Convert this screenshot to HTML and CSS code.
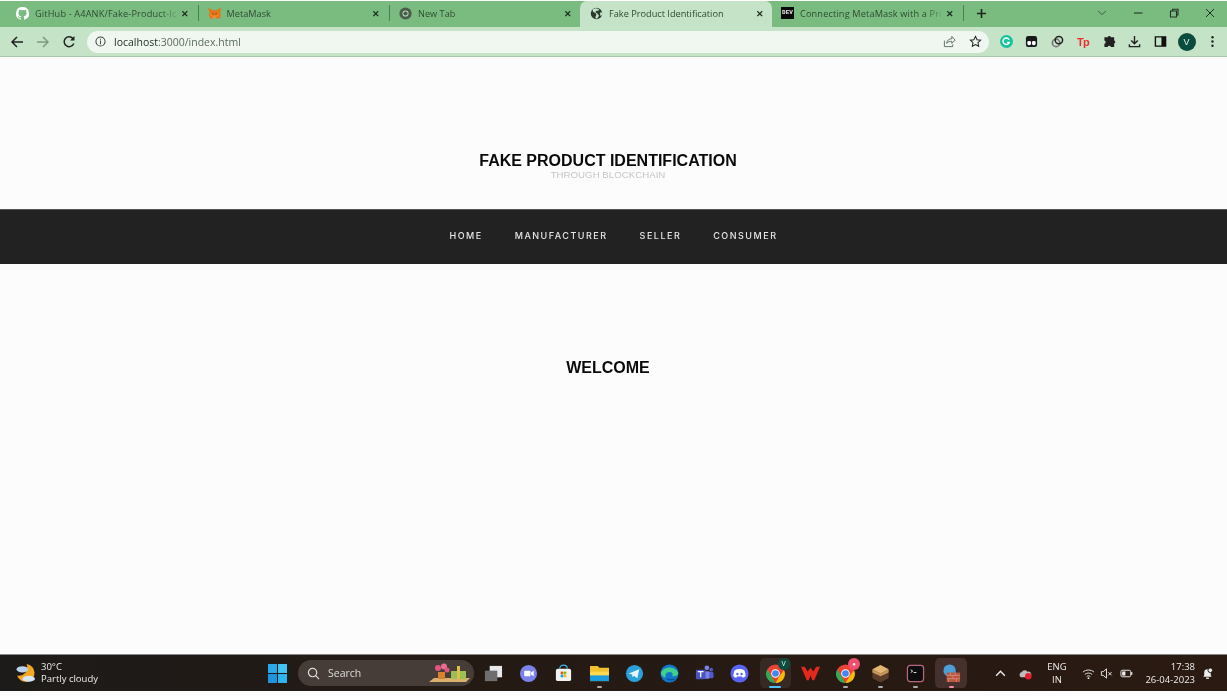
FILE: index.html
```html
<!DOCTYPE html>
<html lang="en">
<head>
<meta charset="utf-8">
<title>Fake Product Identification</title>
<link rel="stylesheet" href="styles.css">
</head>
<body>
<div class="browser">
  <div class="tabstrip">
    <div class="tab">
      <svg class="fav" viewBox="0 0 16 16"><path fill="#fff" d="M8 0a8 8 0 0 0-2.500 15.600c.4.100.5-.2.5-.4v-1.400c-2.200.5-2.700-1-2.700-1-.4-.9-.9-1.200-.9-1.200-.7-.5.100-.5.100-.5.800.100 1.200.8 1.200.8.700 1.200 1.900.9 2.300.7.100-.5.300-.9.500-1.100-1.800-.2-3.600-.9-3.600-4 0-.9.300-1.600.8-2.100-.1-.2-.4-1 .1-2.100 0 0 .7-.2 2.200.8a7.600 7.600 0 0 1 4 0c1.500-1 2.200-.8 2.200-.8.500 1.100.2 1.900.1 2.100.5.500.8 1.200.8 2.100 0 3.100-1.900 3.800-3.700 4 .3.300.6.800.6 1.500v2.200c0 .2.100.5.600.4A8 8 0 0 0 8 0z"/></svg>
      <span class="tab-title fade">GitHub - A4ANK/Fake-Product-Ic</span>
      <span class="tab-x">✕</span>
    </div>
    <i class="tab-sep"></i>
    <div class="tab">
      <svg class="fav" viewBox="0 0 16 16"><path fill="#e2761b" d="M0 1l6 3h4l6-3-1 6 1 3-2 4.500-3-1-1 1H7l-1-1-3 1L1 10l1-3z"/><path fill="#f6851b" d="M5 8l1.500 2H9.500L11 8l2.500 1-2.500 3.500H5L2.500 9z"/><path fill="#763d16" d="M5 8h2v1.200H5zM9 8h2v1.200H9z"/><path fill="#c0ad9e" d="M6.500 12.500h3v1.500h-3z"/></svg>
      <span class="tab-title">MetaMask</span>
      <span class="tab-x">✕</span>
    </div>
    <i class="tab-sep"></i>
    <div class="tab">
      <svg class="fav" viewBox="0 0 16 16"><circle cx="8" cy="8" r="7.500" fill="#4a5c4c"/><circle cx="8" cy="8" r="3.800" fill="#b5d8b8"/><circle cx="8" cy="8" r="2.600" fill="#4a5c4c"/></svg>
      <span class="tab-title">New Tab</span>
      <span class="tab-x">✕</span>
    </div>
    <div class="tab tab-active">
      <svg class="fav" viewBox="0 0 16 16"><circle cx="8" cy="8" r="7" fill="#2b3a2d"/><path fill="#c5e3c7" d="M7 1.500L3 3l1 3 2.500 1L8 9.500l-1.500 3 1 2 2-1 1.500-3L9 8 6.500 6 8 4.500h2.500L11 2.500zM12 7l2.500-.5.500 3-2 2-.5-2.500z"/></svg>
      <span class="tab-title">Fake Product Identification</span>
      <span class="tab-x">✕</span>
    </div>
    <div class="tab tab-dev">
      <span class="dev">DEV</span>
      <span class="tab-title fade">Connecting MetaMask with a Pri</span>
      <span class="tab-x">✕</span>
    </div>
    <i class="tab-sep"></i>
    <svg class="newtab" viewBox="0 0 12 12"><path d="M6 1v10M1 6h10" stroke="#1c2b1e" stroke-width="1.800"/></svg>
    <div class="winctl">
      <svg class="ctl" viewBox="0 0 12 12"><path d="M2 4l4 3.500L10 4" fill="none" stroke="#42604a" stroke-width="1"/></svg>
      <svg class="ctl" viewBox="0 0 12 12"><path d="M2 6h8.500" stroke="#223026" stroke-width="1.100"/></svg>
      <svg class="ctl" viewBox="0 0 12 12"><path d="M2.500 4h6v6h-6zM4.500 4V2.200h5.500v5.800H8.500" fill="none" stroke="#223026" stroke-width="1.100"/></svg>
      <svg class="ctl" viewBox="0 0 12 12"><path d="M2 2l8 8M10 2l-8 8" stroke="#223026" stroke-width="1"/></svg>
    </div>
  </div>
  <div class="toolbar">
    <svg class="nav-ic" viewBox="0 0 14 14"><path d="M13 7H2M7 2L2 7l5 5" fill="none" stroke="#222" stroke-width="1.500"/></svg>
    <svg class="nav-ic" viewBox="0 0 14 14"><path d="M1 7h11M7 2l5 5-5 5" fill="none" stroke="#7f9a82" stroke-width="1.500"/></svg>
    <svg class="nav-ic" viewBox="0 0 14 14"><path d="M11.800 8.500A5 5 0 1 1 11 3.500" fill="none" stroke="#222" stroke-width="1.500"/><path d="M12.500 1v4.500H8z" fill="#222"/></svg>
    <div class="omnibox">
      <svg class="info" viewBox="0 0 12 12"><circle cx="6" cy="6" r="5" fill="none" stroke="#3b4a3d" stroke-width="1.100"/><path d="M6 5v4M6 3v1.200" stroke="#3b4a3d" stroke-width="1.100"/></svg>
      <span class="url"><b>localhost</b>:3000/index.html</span>
      <svg class="omni-ic" viewBox="0 0 14 14"><path d="M1.500 6v6.500h9V10M4 9c0-3.500 3-5 5.500-5V1.500L13 5.500 9.500 9V6.800C7 6.800 5.200 7.300 4 9z" fill="none" stroke="#5d6b5f" stroke-width="1"/></svg>
      <svg class="omni-ic" viewBox="0 0 14 14"><path d="M7 1.500l1.700 3.600 3.800.5-2.800 2.600.7 3.900L7 10.200l-3.400 1.900.7-3.900L1.500 5.600l3.800-.5z" fill="none" stroke="#222" stroke-width="1.100"/></svg>
    </div>
    <div class="exts">
      <svg class="ext" viewBox="0 0 14 14"><circle cx="7" cy="7" r="7" fill="#15c39a"/><path d="M9.800 5A3.500 3.500 0 1 0 10 8H7.500" fill="none" stroke="#fff" stroke-width="1.500"/></svg>
      <svg class="ext" viewBox="0 0 14 14"><rect x="1" y="1" width="12" height="12" rx="2.500" fill="#16181a"/><rect x="2.500" y="6.500" width="4" height="4.500" rx="1.500" fill="#fff"/><rect x="7.500" y="6.500" width="4" height="4.500" rx="1.500" fill="#fff"/></svg>
      <svg class="ext" viewBox="0 0 14 14"><circle cx="5.500" cy="8.500" r="4" fill="none" stroke="#777" stroke-width="1.800"/><circle cx="8.500" cy="5.500" r="4" fill="none" stroke="#222" stroke-width="1.600"/></svg>
      <span class="tp">Tp</span>
      <svg class="ext" viewBox="0 0 14 14"><path fill="#222" d="M5 2.500a1.800 1.800 0 0 1 3.500 0H12v3.300a1.800 1.800 0 0 1 0 3.400V13H8.500a1.800 1.800 0 0 0-3.500 0H1.500V9.500a1.800 1.800 0 0 0 0-3.500V2.500z"/></svg>
      <svg class="ext" viewBox="0 0 14 14"><path d="M7 1v8M3.500 6L7 9.500 10.500 6M1.500 10v2.500h11V10" fill="none" stroke="#222" stroke-width="1.500"/></svg>
      <svg class="ext" viewBox="0 0 14 14"><path d="M1.500 2h11v10h-11z" fill="none" stroke="#111" stroke-width="1.500"/><path d="M8 2h4.500v10H8z" fill="#111"/></svg>
      <span class="avatar">V</span>
      <svg class="ext" viewBox="0 0 14 14"><circle cx="7" cy="2.500" r="1.300" fill="#222"/><circle cx="7" cy="7" r="1.300" fill="#222"/><circle cx="7" cy="11.500" r="1.300" fill="#222"/></svg>
    </div>
  </div>
</div>

<main class="page">
  <header class="hero">
    <h1 class="hero-title">FAKE PRODUCT IDENTIFICATION</h1>
    <p class="hero-sub">THROUGH BLOCKCHAIN</p>
  </header>
  <nav class="mainnav">
    <a>HOME</a><a>MANUFACTURER</a><a>SELLER</a><a>CONSUMER</a>
  </nav>
  <h2 class="welcome">WELCOME</h2>
</main>

<footer class="taskbar">
  <div class="weather">
    <svg class="wx" viewBox="0 0 20 20"><path d="M11 1a8.500 8.500 0 1 1-9 11 8 8 0 0 0 9-11z" fill="#f5a623"/><ellipse cx="7" cy="6" rx="5.500" ry="3" fill="#b9d4ee"/><ellipse cx="13" cy="15" rx="6" ry="2.800" fill="#d5e6f7"/></svg>
    <div class="wx-text"><span>30°C</span><span>Partly cloudy</span></div>
  </div>
  <div class="apps">
    <svg class="win" viewBox="0 0 18 18"><rect width="8.500" height="8.500" fill="#2aa8ea"/><rect x="9.500" width="8.500" height="8.500" fill="#40c4f4"/><rect y="9.500" width="8.500" height="8.500" fill="#1f93dd"/><rect x="9.500" y="9.500" width="8.500" height="8.500" fill="#2fb5ee"/></svg>
    <div class="search">
      <svg class="search-ic" viewBox="0 0 14 14"><circle cx="6" cy="6" r="4.500" fill="none" stroke="#ddd" stroke-width="1.300"/><path d="M9.300 9.300L13 13" stroke="#ddd" stroke-width="1.300"/></svg>
      <span class="search-text">Search</span>
      <svg class="search-art" viewBox="0 0 42 20"><path d="M0 19l5-4h36l-4 4z" fill="#d9b06c"/><rect x="9" y="9" width="7" height="7" fill="#d9822b"/><circle cx="9" cy="5" r="3" fill="#e0567f"/><circle cx="15" cy="3.500" r="3" fill="#ec6c94"/><circle cx="18" cy="7" r="2.500" fill="#e0567f"/><rect x="22" y="8" width="15" height="8" fill="#9cbf54"/><rect x="28" y="3" width="3" height="13" fill="#d8c24a"/></svg>
    </div>
    <div class="dock">
      <span class="app"><svg viewBox="0 0 20 20"><rect x="6" y="2" width="13" height="12" fill="#e8e8e8"/><rect x="1" y="7" width="13" height="11" fill="#6e6e6e"/></svg></span>
      <span class="app"><svg viewBox="0 0 20 20"><circle cx="10" cy="10" r="9" fill="#7b83eb"/><rect x="5.500" y="7" width="6.500" height="6" rx="1" fill="#fff"/><path d="M12.500 9l3-2v6l-3-2z" fill="#fff"/></svg></span>
      <span class="app"><svg viewBox="0 0 20 20"><rect x="2" y="5" width="16" height="13" rx="2" fill="#f2f2f2"/><path d="M6 5c0-5 8-5 8 0" fill="none" stroke="#3ab4e8" stroke-width="1.300"/><rect x="7" y="8" width="2.800" height="2.800" fill="#f25022"/><rect x="10.200" y="8" width="2.800" height="2.800" fill="#7fba00"/><rect x="7" y="11.200" width="2.800" height="2.800" fill="#00a4ef"/><rect x="10.200" y="11.200" width="2.800" height="2.800" fill="#ffb900"/></svg></span>
      <span class="app on"><svg viewBox="0 0 20 20"><path d="M0 2h8l2 2h10v14H0z" fill="#f2c12e"/><path d="M0 8h20v10H0z" fill="#ffd84d"/><rect y="12" width="20" height="6" fill="#1b9be0"/></svg></span>
      <span class="app"><svg viewBox="0 0 20 20"><circle cx="10" cy="10" r="9" fill="#2aa1da"/><path d="M4 10l11-4.500-2 9.500-3.500-2.500-1.500 1.500-.5-3z" fill="#e8f5fb"/></svg></span>
      <span class="app"><svg viewBox="0 0 20 20"><circle cx="10" cy="10" r="9.500" fill="#1277c9"/><path d="M1 9.500C3 3 15 1 19 9c.5 3-3 4.500-6 3.500 1-2-.5-4-3-4-3.500 0-5 3-4 6C3 13.500 1.500 12 1 9.500z" fill="#3fd08e"/><path d="M6 15c3 3.500 8 3 11 0-4 1.500-8 .5-11 0z" fill="#0a4f99"/></svg></span>
      <span class="app"><svg viewBox="0 0 20 20"><circle cx="12.500" cy="4" r="2.500" fill="#7b83eb"/><circle cx="17" cy="6" r="2" fill="#5059c9"/><rect x="9" y="7.500" width="7" height="8" rx="2" fill="#7b83eb"/><rect x="15" y="8.500" width="4.500" height="6.500" rx="1.500" fill="#5059c9"/><rect x="1" y="6" width="10" height="10" rx="1" fill="#4b53bc"/><path d="M3 8h6M6 8v6" stroke="#fff" stroke-width="1.300"/></svg></span>
      <span class="app"><svg viewBox="0 0 20 20"><circle cx="10" cy="10" r="9.500" fill="#5865f2"/><path d="M5 6.500c3-1.500 7-1.500 10 0 1 2 1.500 4.500 1.500 6.500-1 1-2 1.200-3 1.500l-.8-1.300H7.300l-.8 1.300c-1-.3-2-.5-3-1.500 0-2 .5-4.500 1.500-6.500z" fill="#fff"/><circle cx="7.800" cy="10.500" r="1.300" fill="#5865f2"/><circle cx="12.200" cy="10.500" r="1.300" fill="#5865f2"/></svg></span>
      <span class="app active"><svg viewBox="0 0 20 20"><circle cx="10" cy="10" r="9.500" fill="#ea4335"/><path d="M1.500 5.500L6 13.500l4 6.500A9.500 9.500 0 0 1 1.500 5.500z" fill="#34a853"/><path d="M10 20l4.200-7L19 6.500A9.500 9.500 0 0 1 10 20z" fill="#fbbc05"/><circle cx="10" cy="10" r="4.500" fill="#fff"/><circle cx="10" cy="10" r="3.500" fill="#4285f4"/></svg><b class="badge green">V</b></span>
      <span class="app"><svg viewBox="0 0 20 20"><path d="M0 3h4l3 5 3-4 3 4 3-5h4l-6 14h-2l-2-5-2 5H6z" fill="#e3291e"/></svg></span>
      <span class="app on"><svg viewBox="0 0 20 20"><circle cx="10" cy="10" r="9.500" fill="#ea4335"/><path d="M1.500 5.500L6 13.500l4 6.500A9.500 9.500 0 0 1 1.500 5.500z" fill="#34a853"/><path d="M10 20l4.200-7L19 6.500A9.500 9.500 0 0 1 10 20z" fill="#fbbc05"/><circle cx="10" cy="10" r="4.500" fill="#fff"/><circle cx="10" cy="10" r="3.500" fill="#4285f4"/></svg><b class="badge pink">●</b></span>
      <span class="app on"><svg viewBox="0 0 20 20"><path d="M10 1l8.500 4.500v9.500L10 19.500 1.500 15V5.500z" fill="#5b3c2a"/><path d="M10 1l8.500 4.500L10 10 1.500 5.500z" fill="#e3b673"/><path d="M1.500 5.500L10 10l8.500-4.500V9L10 13 1.500 9z" fill="#c79557"/></svg></span>
      <span class="app on"><svg viewBox="0 0 20 20"><rect x="1.500" y="1.500" width="17" height="17" rx="3" fill="#0d0d0d" stroke="#b5677e" stroke-width="1.300"/><path d="M5 6l2 1.500L5 9M8 9h3" fill="none" stroke="#eee" stroke-width="1"/></svg></span>
      <span class="app on red"><svg viewBox="0 0 20 20"><circle cx="8" cy="7" r="6.500" fill="#4c9fd6"/><rect x="5" y="9" width="14" height="10" fill="#b8573f"/><path d="M5 12h14M5 15.500h14M9 9v3M14 9v3M11.500 12v3.500M7 15.500V19M15 15.500V19" stroke="#e3a58f" stroke-width=".6"/></svg></span>
    </div>
  </div>
  <div class="tray">
    <svg class="tr chev" viewBox="0 0 12 12"><path d="M2 8l4-4 4 4" fill="none" stroke="#eee" stroke-width="1.300"/></svg>
    <svg class="tr cloud" viewBox="0 0 14 14"><path d="M2 11a3 3 0 0 1 1-5.500A3.500 3.500 0 0 1 9 5a3 3 0 0 1 2 6z" fill="#bdbdbd"/><circle cx="10" cy="10" r="3.500" fill="#e81e2c"/></svg>
    <div class="lang"><span>ENG</span><span>IN</span></div>
    <svg class="tr wifi" viewBox="0 0 14 14"><path d="M1 5.500c3.500-3 8.500-3 12 0M3 8c2.500-2 5.500-2 8 0M5 10.300c1.200-1 2.800-1 4 0" fill="none" stroke="#eee" stroke-width="1"/><circle cx="7" cy="12" r="1" fill="#eee"/></svg>
    <svg class="tr vol" viewBox="0 0 14 14"><path d="M1.500 5v4h2L7 12V2L3.500 5zM9 5.500l3.500 3.500M12.500 5.500L9 9" fill="none" stroke="#eee" stroke-width="1"/></svg>
    <svg class="tr batt" viewBox="0 0 14 14"><rect x="1" y="3.500" width="10.500" height="7" rx="1.500" fill="none" stroke="#eee" stroke-width="1"/><rect x="2.300" y="4.800" width="3.500" height="4.400" fill="#eee"/><rect x="12" y="5.500" width="1.300" height="3" fill="#eee"/></svg>
    <div class="clock"><span>17:38</span><span>26-04-2023</span></div>
    <svg class="tr bell" viewBox="0 0 14 14"><path d="M2.500 10.500l1-1.500V6a3.500 3.500 0 0 1 7 0v3l1 1.500z" fill="#eee"/><rect x="5.500" y="11.300" width="3" height="1.500" fill="#eee"/><circle cx="10" cy="3.500" r="2.500" fill="#eee" stroke="#241a14"/></svg>
  </div>
</footer>
</body>
</html>
```

FILE: styles.css
```css
* { box-sizing: border-box; }
html, body { margin: 0; height: 100%; overflow: hidden; }
body {
  display: flex;
  flex-direction: column;
  height: 696px;
  background: #fcfcfc;
  font-family: "Liberation Sans", Arial, sans-serif;
  padding-top: 1px;
  padding-bottom: 5px;
}
.browser, .page, .taskbar { filter: blur(.35px); }
.browser { flex: none; }
.tabstrip {
  height: 26px;
  background: #7abc7f;
  display: flex;
  align-items: stretch;
  padding-left: 8px;
}
.tab {
  width: 188.500px;
  display: flex;
  align-items: center;
  padding: 0 6px 2px 8px;
  flex: none;
  font-family: "Open Sans", sans-serif;
  font-size: 9.200px;
  color: #2f4a33;
}
.tab-active {
  width: 192px;
  background: #c5e3c7;
  border-radius: 7px 7px 0 0;
  margin-left: .5px;
  padding-left: 10px;
  padding-bottom: 6px;
  height: 30px;
}
.tab-dev { width: 190px; padding-left: 9px; }
.fav { width: 13px; height: 13px; flex: none; margin-right: 6px; }
.tab-title {
  flex: 1;
  min-width: 0;
  white-space: nowrap;
}
.fade {
  letter-spacing: .14px;
  -webkit-mask-image: linear-gradient(to right, #000 88%, transparent 100%);
  mask-image: linear-gradient(to right, #000 88%, transparent 100%);
}
.tab-x { flex: none; width: 12px; font-size: 9px; font-weight: 700; color: #1c2b1e; text-align: center; }
.tab-sep { flex: none; width: 1px; height: 16px; align-self: center; background: #4f7d54; margin: 0 1px 2px; }
.dev {
  flex: none;
  width: 13px;
  height: 12px;
  margin-right: 6px;
  background: #0a0a0a;
  color: #eee;
  font: 700 6px/12px "Liberation Mono", monospace;
  text-align: center;
}
.newtab { width: 11px; height: 11px; flex: none; align-self: center; margin: 0 0 2px 11px; }
.winctl {
  margin-left: auto;
  display: flex;
  align-items: center;
  gap: 24px;
  padding: 0 11px 3px 0;
}
.ctl { width: 12px; height: 12px; display: block; }
.toolbar {
  height: 30px;
  background: #c5e3c7;
  border-bottom: 1px solid #a9c9ac;
  display: flex;
  align-items: center;
  padding: 0 10px;
}
.nav-ic { width: 14px; height: 14px; flex: none; margin-right: 12px; }
.omnibox {
  flex: none;
  width: 902px;
  height: 22px;
  margin-left: -1px;
  background: #eff7f0;
  border-radius: 11px;
  display: flex;
  align-items: center;
  padding: 0 7px 0 8px;
}
.info { width: 11px; height: 11px; flex: none; margin-right: 8px; }
.url { font-family: "Open Sans", sans-serif; font-size: 10.500px; color: #5b6b5d; flex: 1; }
.url b { font-weight: 400; color: #1c2b1e; }
.omni-ic { width: 13px; height: 13px; flex: none; margin-left: 13px; }
.exts {
  display: flex;
  align-items: center;
  margin-left: 10.500px;
  gap: 12.800px;
}
.ext { width: 13px; height: 13px; flex: none; }
.tp {
  flex: none;
  width: 13px;
  font-size: 11px;
  font-weight: 700;
  color: #ee2d2d;
  letter-spacing: -.5px;
}
.avatar {
  flex: none;
  width: 18px;
  height: 18px;
  margin: 0 -2.500px;
  border-radius: 50%;
  background: #0a4d3f;
  color: #e9f3ea;
  font-size: 9px;
  line-height: 18px;
  text-align: center;
}

.page { flex: 1; display: flex; flex-direction: column; min-height: 0; background: #fcfcfc; }
.hero {
  height: 152px;
  text-align: center;
  padding: 95px 11px 0 0;
}
.hero-title { margin: 0; font-size: 16px; line-height: 17px; font-weight: 700; color: #0a0a0a; }
.hero-sub { margin: 0; font-size: 9.700px; line-height: 11px; color: #c6c6c6; }
.mainnav {
  height: 55px;
  background: #222;
  border-top: 1px solid #555;
  display: flex;
  justify-content: center;
  align-items: center;
  gap: 32px;
  padding-bottom: 4px;
  font-family: Inter, sans-serif;
  font-size: 9px;
  font-weight: 500;
  letter-spacing: 1.500px;
  color: #e6e6e6;
}
.welcome {
  margin: 95px 0 0;
  padding-right: 11px;
  text-align: center;
  font-size: 16px;
  line-height: 18px;
  font-weight: 700;
  color: #0a0a0a;
}

.taskbar {
  flex: none;
  height: 37px;
  background: linear-gradient(to right, #1d1b19, #241a14 40%, #2a1a12);
  border-top: 1px solid #888;
  display: flex;
  align-items: center;
  color: #eee;
  font-family: "Open Sans", sans-serif;
  font-size: 9.500px;
}
.weather { display: flex; align-items: center; width: 268px; padding-left: 15px; flex: none; }
.wx { width: 21px; height: 21px; flex: none; margin-right: 5px; }
.wx-text { display: flex; flex-direction: column; line-height: 12.500px; }
.apps { display: flex; align-items: center; flex: none; }
.win { width: 19px; height: 19px; flex: none; margin-right: 11px; }
.search {
  width: 176px;
  height: 26px;
  border-radius: 13px;
  background: #463d38;
  display: flex;
  align-items: center;
  padding: 0 3px 0 9px;
  flex: none;
  font-size: 10.500px;
  color: #ddd;
}
.search-ic { width: 13px; height: 13px; flex: none; margin-right: 8px; }
.search-text { flex: 1; }
.search-art { width: 42px; height: 22px; flex: none; }
.dock { display: flex; margin-left: 2px; }
.app {
  width: 35.200px;
  height: 30px;
  display: flex;
  align-items: center;
  justify-content: center;
  position: relative;
  flex: none;
}
.app svg { width: 19px; height: 19px; display: block; }
.on::after, .active::after {
  content: "";
  position: absolute;
  bottom: 0;
  left: 50%;
  width: 5px;
  height: 2px;
  margin-left: -2.500px;
  background: #aaa;
  border-radius: 1px;
}
.active, .red { padding: 0 2px; background-clip: content-box; border-radius: 6px; }
.active { background-color: #362b24; }
.active::after { width: 12px; margin-left: -6px; background: #4fc3f7; }
.red { background-color: #46302e; }
.red::after { background: #f28b9b; }
.badge {
  position: absolute;
  top: 0;
  right: 3px;
  width: 12px;
  height: 12px;
  border-radius: 50%;
  font-size: 7px;
  line-height: 12px;
  text-align: center;
  font-weight: 400;
  color: #e8f3ea;
}
.green { background: #0a4d3f; }
.pink { background: #f0506e; color: #fff; font-size: 6px; }
.tray { margin-left: auto; display: flex; align-items: center; padding-right: 13px; flex: none; }
.tr { width: 13px; height: 13px; flex: none; display: block; }
.cloud { margin-left: 12px; }
.lang { display: flex; flex-direction: column; align-items: center; width: 24px; margin: 0 13px; line-height: 13px; }
.vol { margin-left: 5px; }
.batt { margin-left: 7px; }
.clock { display: flex; flex-direction: column; align-items: flex-end; line-height: 13px; margin-left: 11px; width: 51px; }
.bell { margin-left: 6px; }
```
